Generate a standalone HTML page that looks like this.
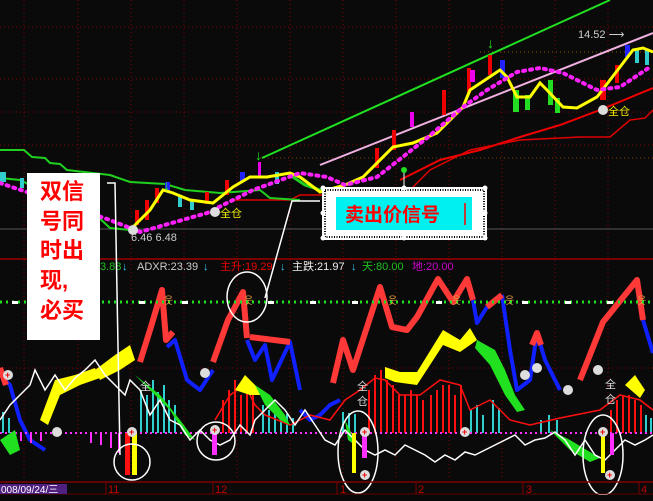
<!DOCTYPE html>
<html><head><meta charset="utf-8"><style>
html,body{margin:0;padding:0;background:#0a0a0a;width:653px;height:501px;overflow:hidden}
svg{display:block}
text{font-family:"Liberation Sans","Noto Sans CJK SC",sans-serif}
</style></head><body>
<svg width="653" height="501" viewBox="0 0 653 501" xmlns="http://www.w3.org/2000/svg">
<rect width="653" height="501" fill="#0a0a0a"/>
<g stroke="#800000" stroke-dasharray="1,3" stroke-width="1">
<line x1="0" y1="27" x2="653" y2="27"/>
<line x1="0" y1="79" x2="653" y2="79"/>
<line x1="0" y1="112" x2="653" y2="112"/>
<line x1="0" y1="145" x2="653" y2="145"/>
<line x1="0" y1="368" x2="653" y2="368"/>
<line x1="24" y1="0" x2="24" y2="480"/><line x1="78" y1="0" x2="78" y2="480"/>
<line x1="131" y1="0" x2="131" y2="480"/><line x1="184" y1="0" x2="184" y2="480"/>
<line x1="237" y1="0" x2="237" y2="480"/><line x1="290" y1="0" x2="290" y2="480"/>
<line x1="343" y1="0" x2="343" y2="480"/><line x1="396" y1="0" x2="396" y2="480"/>
<line x1="449" y1="0" x2="449" y2="480"/><line x1="502" y1="0" x2="502" y2="480"/>
<line x1="555" y1="0" x2="555" y2="480"/><line x1="608" y1="0" x2="608" y2="480"/>
</g>
<line x1="260" y1="158" x2="653" y2="158" stroke="#804000" stroke-dasharray="1,3"/>
<line x1="480" y1="52" x2="653" y2="52" stroke="#806000" stroke-dasharray="1,3"/>
<line x1="0" y1="229" x2="653" y2="229" stroke="#555" stroke-width="1"/>
<line x1="0" y1="259" x2="653" y2="259" stroke="#7a0000" stroke-width="2"/>
<line x1="262" y1="158" x2="610" y2="0" stroke="#20e020" stroke-width="2"/>
<line x1="320" y1="165" x2="653" y2="33" stroke="#f0b0e0" stroke-width="2"/>
<polyline points="400,180 440,160 480,150 520,137 560,125 600,110 653,88" fill="none" stroke="#f00000" stroke-width="2"/>
<polyline points="410,190 430,170 470,150 520,140 580,137 610,137 630,120 645,118 653,110" fill="none" stroke="#e00000" stroke-width="1.5"/>
<polyline points="230,200 290,200 300,195 330,195" fill="none" stroke="#e00000" stroke-width="1.5"/>
<polyline points="0,150 24,150 32,157 45,158 50,163 60,164 67,170 110,175 130,182 165,184 185,190 220,193 260,190 270,198 300,200" fill="none" stroke="#20d020" stroke-width="2"/>
<polyline points="0,178 20,180 30,185 60,190 80,200 110,228 130,230" fill="none" stroke="#20d020" stroke-width="2"/>
<polyline points="290,175 305,185 320,190 335,190" fill="none" stroke="#20d020" stroke-width="3"/>
<g>
<rect x="135" y="210" width="4" height="15" fill="#e00"/><rect x="145" y="200" width="4" height="20" fill="#e00"/><rect x="155" y="188" width="4" height="15" fill="#e00"/>
<rect x="165" y="182" width="5" height="10" fill="#22f"/><rect x="178" y="195" width="4" height="12" fill="#3cc"/><rect x="190" y="200" width="4" height="10" fill="#3cc"/>
<rect x="205" y="192" width="4" height="12" fill="#e00"/><rect x="225" y="180" width="4" height="15" fill="#e00"/><rect x="240" y="172" width="5" height="10" fill="#22f"/>
<rect x="258" y="162" width="3" height="15" fill="#e0e"/><rect x="275" y="172" width="4" height="12" fill="#3cc"/>
<rect x="375" y="148" width="4" height="20" fill="#e00"/><rect x="392" y="130" width="4" height="20" fill="#e00"/><rect x="410" y="112" width="4" height="15" fill="#e0e"/>
<rect x="442" y="90" width="4" height="25" fill="#e00"/><rect x="467" y="68" width="4" height="25" fill="#e00"/><rect x="470" y="70" width="5" height="12" fill="#e0e"/>
<rect x="488" y="55" width="4" height="20" fill="#e00"/><rect x="500" y="60" width="5" height="18" fill="#22f"/>
<rect x="513" y="90" width="6" height="22" fill="#2d2"/><rect x="525" y="95" width="5" height="15" fill="#2d2"/><rect x="548" y="80" width="5" height="25" fill="#2d2"/>
<rect x="555" y="98" width="5" height="15" fill="#2d2"/><rect x="600" y="80" width="6" height="20" fill="#e00"/><rect x="615" y="65" width="4" height="18" fill="#e00"/>
<rect x="625" y="45" width="5" height="12" fill="#22f"/><rect x="635" y="48" width="4" height="15" fill="#3cc"/><rect x="645" y="50" width="4" height="15" fill="#3cc"/>
<rect x="0" y="172" width="6" height="10" fill="#3cc"/><rect x="20" y="178" width="4" height="10" fill="#3cc"/>
</g>
<polyline points="130,230 150,210 163,190 173,193 190,200 213,203 233,187 250,177 267,177 290,173 300,177 320,192 345,185 363,177 393,147 413,143 437,133 463,107 470,90 500,70 507,77 517,97 530,97 540,83 547,90 563,107 577,108 597,97 610,80 633,50 643,48 653,52" fill="none" stroke="#ffff00" stroke-width="3"/>
<polyline points="0,183 110,220 140,232 207,213 253,190 300,173 327,177 345,185 377,177 427,138 463,107 487,90 517,72 540,68 563,73 597,90 620,87 650,67" fill="none" stroke="#ff20ff" stroke-width="4" stroke-dasharray="2,5" stroke-linecap="round"/>
<text x="255" y="160" fill="#20e020" font-size="14" font-weight="bold">↓</text>
<text x="163" y="190" fill="#20e020" font-size="14" font-weight="bold">↓</text>
<text x="487" y="48" fill="#20e020" font-size="14" font-weight="bold">↓</text>
<text x="578" y="38" fill="#ccc" font-size="11">14.52 ⟶</text>
<circle cx="215" cy="212" r="5" fill="#ddd"/><text x="220" y="217" fill="#ee0" font-size="11">全仓</text>
<circle cx="603" cy="110" r="5" fill="#ddd"/><text x="608" y="115" fill="#ee0" font-size="11">全仓</text>
<circle cx="133" cy="230" r="5" fill="#ddd"/><text x="131" y="241" fill="#ccc" font-size="11">6.46  6.48</text>
<g font-size="11">
<text x="100" y="270" fill="#20c020">3.88</text><text x="122" y="270" fill="#3cf">↓</text>
<text x="137" y="270" fill="#ccc">ADXR:23.39</text><text x="203" y="270" fill="#3cf">↓</text>
<text x="220" y="270" fill="#e00">主升:19.29</text><text x="280" y="270" fill="#3cf">↓</text>
<text x="292" y="270" fill="#eee">主跌:21.97</text><text x="351" y="270" fill="#3cf">↓</text>
<text x="362" y="270" fill="#20c020">天:80.00</text>
<text x="412" y="270" fill="#c0c">地:20.00</text>
</g>
<g fill="none" stroke="#1020ff" stroke-width="4" stroke-linejoin="round">
<polyline points="0,375 10,385 20,420 30,440 45,450"/>
<polyline points="167,347 175,340 187,380 200,390 213,370"/>
<polyline points="247,340 255,360 265,345 272,380 290,342 300,390"/>
<polyline points="473,300 477,323 487,307"/>
<polyline points="502,295 510,350 517,390 530,380 537,333 545,360 560,390"/>
<polyline points="643,320 653,353"/>
<polyline points="300,410 310,420 320,415 330,405 340,400"/>
</g>
<g fill="none" stroke="#ff3838" stroke-width="6" stroke-linejoin="round">
<polyline points="140,362 150,330 162,290 166,340 173,332"/>
<polyline points="213,362 228,320 243,292 247,338"/>
<polyline points="250,337 290,342"/>
<polyline points="333,383 343,340 353,370 380,287 392,327 407,330 417,317 438,279 453,302 467,279 473,300"/>
<polyline points="487,307 502,295"/>
<polyline points="532,345 537,333 541,345"/>
<polyline points="580,380 603,322 637,280 643,320"/>
<polyline points="0,368 6,385"/>
</g>
<line x1="0" y1="302" x2="653" y2="302" stroke="#20e020" stroke-width="3" stroke-dasharray="2,4"/>
<g fill="#fff"><rect x="12" y="301" width="6" height="3"/><rect x="139" y="301" width="6" height="3"/><rect x="182" y="301" width="6" height="3"/><rect x="268" y="301" width="6" height="3"/><rect x="310" y="301" width="6" height="3"/><rect x="352" y="301" width="6" height="3"/><rect x="436" y="301" width="6" height="3"/><rect x="522" y="301" width="6" height="3"/><rect x="565" y="301" width="6" height="3"/><rect x="607" y="301" width="6" height="3"/></g>
<g fill="#e0a040" font-size="10"><text x="164" y="304">웃</text><text x="244" y="304">웃</text><text x="388" y="304">웃</text><text x="452" y="304">웃</text><text x="505" y="304">웃</text><text x="637" y="304">웃</text></g>
<g fill="#30d0d0">
<rect x="2" y="412" width="2" height="21"/><rect x="8" y="418" width="2" height="15"/>
<rect x="140" y="390" width="2" height="43"/><rect x="146" y="395" width="2" height="38"/><rect x="152" y="380" width="2" height="53"/><rect x="157" y="392" width="2" height="41"/><rect x="163" y="385" width="2" height="48"/><rect x="168" y="400" width="2" height="33"/><rect x="174" y="405" width="2" height="28"/>
<rect x="262" y="405" width="2" height="28"/><rect x="268" y="410" width="2" height="23"/><rect x="274" y="408" width="2" height="25"/><rect x="280" y="412" width="2" height="21"/><rect x="286" y="414" width="2" height="19"/><rect x="292" y="418" width="2" height="15"/>
<rect x="342" y="412" width="2" height="21"/><rect x="348" y="413" width="2" height="20"/><rect x="354" y="414" width="2" height="19"/>
<rect x="470" y="410" width="2" height="23"/><rect x="476" y="405" width="2" height="28"/><rect x="482" y="415" width="2" height="18"/><rect x="492" y="400" width="2" height="33"/><rect x="498" y="408" width="2" height="25"/>
<rect x="540" y="420" width="2" height="13"/><rect x="548" y="415" width="2" height="18"/><rect x="556" y="420" width="2" height="13"/><rect x="645" y="415" width="2" height="18"/><rect x="650" y="418" width="2" height="15"/>
</g>
<g fill="#ff1010">
<rect x="222" y="400" width="2" height="33"/><rect x="228" y="390" width="2" height="43"/><rect x="234" y="380" width="2" height="53"/><rect x="240" y="395" width="2" height="38"/><rect x="246" y="385" width="2" height="48"/><rect x="252" y="395" width="2" height="38"/>
<rect x="368" y="390" width="2" height="43"/><rect x="374" y="375" width="2" height="58"/><rect x="380" y="370" width="2" height="63"/><rect x="386" y="380" width="2" height="53"/><rect x="392" y="385" width="2" height="48"/><rect x="398" y="395" width="2" height="38"/>
<rect x="404" y="395" width="2" height="38"/><rect x="410" y="390" width="2" height="43"/><rect x="416" y="395" width="2" height="38"/><rect x="422" y="400" width="2" height="33"/>
<rect x="430" y="395" width="2" height="38"/><rect x="436" y="390" width="2" height="43"/><rect x="442" y="385" width="2" height="48"/><rect x="448" y="385" width="2" height="48"/><rect x="454" y="395" width="2" height="38"/><rect x="460" y="385" width="2" height="48"/>
<rect x="610" y="410" width="2" height="23"/><rect x="616" y="400" width="2" height="33"/><rect x="622" y="395" width="2" height="38"/><rect x="628" y="395" width="2" height="38"/><rect x="634" y="400" width="2" height="33"/><rect x="640" y="405" width="2" height="28"/>
</g>
<polyline points="215,420 230,395 245,385 255,405 265,415 290,425 310,415 330,420 345,400 360,390 375,378 385,380 400,395 420,395 440,380 460,385 470,410 490,400 510,420 530,425 560,418 600,410 620,395 640,400 653,410" fill="none" stroke="#ff1010" stroke-width="1.5"/>
<g fill="#ff30ff">
<rect x="20" y="433" width="2" height="8"/><rect x="30" y="433" width="2" height="10"/><rect x="40" y="433" width="2" height="8"/><rect x="90" y="433" width="2" height="10"/><rect x="100" y="433" width="2" height="12"/><rect x="110" y="433" width="2" height="15"/><rect x="118" y="433" width="2" height="20"/>
</g>
<line x1="0" y1="433" x2="653" y2="433" stroke="#ff30ff" stroke-width="2" stroke-dasharray="2,3"/>
<polygon points="40,420 55,380 75,375 95,368 100,378 80,385 60,395 48,425" fill="#ffff00"/>
<polygon points="95,370 115,355 130,345 135,360 120,370 100,380" fill="#ffff00"/>
<polygon points="235,390 245,375 255,385 262,395 250,395" fill="#ffff00"/>
<polygon points="385,367 400,372 417,372 443,330 460,340 470,328 477,340 470,345 460,352 443,345 417,385 395,382 385,378" fill="#ffff00"/>
<polygon points="625,385 635,375 645,390 640,398" fill="#ffff00"/>
<polygon points="0,440 10,455 20,450 15,430" fill="#20e020"/>
<polygon points="135,375 150,390 170,410 185,435 195,440 180,420 160,395" fill="#20e020"/>
<polygon points="255,385 270,395 285,415 290,425 280,420 265,405" fill="#20e020"/>
<polygon points="477,340 495,350 505,370 515,395 525,410 517,412 505,395 490,365 475,348" fill="#20e020"/>
<polygon points="550,430 570,440 590,452 600,458 590,462 570,450" fill="#20e020"/>
<polygon points="345,420 350,430 355,445 348,440" fill="#20e020"/>
<polyline points="0,420 10,405 20,395 30,385 35,370 45,390 55,375 65,390 75,378 85,370 95,360 105,375 115,385 125,395 130,380 140,390 150,415 160,400 170,420 180,425 190,440 200,430 210,440 220,445 230,440 240,425 250,435 255,420 265,410 275,400 285,410 295,425 305,410 315,425 325,440 335,445 345,430 355,440 365,450 375,455 385,450 395,455 405,445 415,450 425,455 435,462 445,455 455,460 465,452 475,455 485,450 495,445 505,440 515,435 525,445 535,440 545,438 555,432 565,440 575,455 585,440 595,455 605,460 615,450 625,440 635,445 645,440 653,435" fill="none" stroke="#fff" stroke-width="1.5"/>
<rect x="125" y="433" width="5" height="42" fill="#ff1010"/><rect x="132" y="433" width="5" height="42" fill="#ffff00"/>
<rect x="212" y="430" width="5" height="25" fill="#ff30ff"/>
<rect x="352" y="433" width="4" height="40" fill="#ffff00"/><rect x="362" y="433" width="5" height="25" fill="#ff30ff"/>
<rect x="601" y="433" width="4" height="40" fill="#ffff00"/><rect x="610" y="433" width="4" height="22" fill="#ff30ff"/>
<g fill="#ddd"><circle cx="8" cy="375" r="5"/><circle cx="132" cy="432" r="5"/><circle cx="205" cy="373" r="5"/><circle cx="215" cy="430" r="5"/><circle cx="365" cy="432" r="5"/><circle cx="365" cy="475" r="5"/><circle cx="465" cy="432" r="5"/><circle cx="525" cy="375" r="5"/><circle cx="568" cy="390" r="5"/><circle cx="603" cy="432" r="5"/><circle cx="610" cy="475" r="5"/><circle cx="598" cy="370" r="5"/><circle cx="57" cy="432" r="5"/><circle cx="537" cy="368" r="5"/></g>
<g fill="#e00" font-size="9" font-weight="bold"><text x="5" y="378">+</text><text x="129" y="435">+</text><text x="212" y="433">+</text><text x="362" y="435">+</text><text x="362" y="478">+</text><text x="462" y="435">+</text><text x="600" y="435">+</text><text x="607" y="478">+</text></g>
<text x="605" y="388" fill="#ddd" font-size="11">全</text><text x="605" y="403" fill="#ddd" font-size="11">仓</text>
<text x="357" y="390" fill="#ddd" font-size="11">全</text><text x="357" y="405" fill="#ddd" font-size="11">仓</text>
<text x="140" y="390" fill="#ddd" font-size="11">全</text>
<g fill="none" stroke="#fff" stroke-width="1.5">
<ellipse cx="247" cy="297" rx="20" ry="25"/>
<circle cx="132" cy="462" r="18"/>
<circle cx="216" cy="441" r="19"/>
<ellipse cx="358" cy="452" rx="20" ry="41"/>
<ellipse cx="603" cy="455" rx="20" ry="40"/>
</g>
<polyline points="107,183 115,183 120,455" fill="none" stroke="#fff" stroke-width="1.5"/>
<polyline points="265,298 292,201 320,201" fill="none" stroke="#fff" stroke-width="1.5"/>
<line x1="0" y1="482" x2="653" y2="482" stroke="#800000" stroke-width="1.5"/>
<line x1="0" y1="494" x2="653" y2="494" stroke="#600000" stroke-width="1"/>
<rect x="0" y="484" width="67" height="10" fill="#502080"/>
<text x="1" y="493" fill="#fff" font-size="10">008/09/24/三</text>
<g fill="#c00000" font-size="11"><text x="108" y="493">11</text><text x="215" y="493">12</text><text x="340" y="493">1</text><text x="418" y="493">2</text><text x="526" y="493">3</text><text x="641" y="493">4</text></g>
<g stroke="#800000"><line x1="106" y1="482" x2="106" y2="494"/><line x1="213" y1="482" x2="213" y2="494"/><line x1="337" y1="482" x2="337" y2="494"/><line x1="416" y1="482" x2="416" y2="494"/><line x1="523" y1="482" x2="523" y2="494"/><line x1="639" y1="482" x2="639" y2="494"/></g>
<rect x="0" y="495" width="653" height="6" fill="#080808"/>
<rect x="27" y="173" width="73" height="167" fill="#fff"/>
<g fill="#ff0000" font-size="22" font-weight="bold">
<text x="40" y="199">双信</text><text x="40" y="229">号同</text><text x="40" y="258">时出</text><text x="40" y="288">现,</text><text x="40" y="318">必买</text>
</g>
<rect x="322" y="187" width="165" height="53" fill="#fff"/>
<rect x="325" y="190" width="159" height="47" fill="none" stroke="#000" stroke-width="2" stroke-dasharray="1,1.5"/>
<rect x="328" y="193" width="153" height="41" fill="#fff"/>
<rect x="336" y="197" width="136" height="33" fill="#00f0f0"/>
<text x="345" y="221" fill="#ff0000" font-size="19" font-weight="bold">卖出价信号</text>
<line x1="465" y1="203" x2="465" y2="225" stroke="#f00" stroke-width="1.5"/>
<g fill="#fff"><circle cx="323" cy="188" r="2.5"/><circle cx="404" cy="188" r="2.5"/><circle cx="485" cy="188" r="2.5"/><circle cx="323" cy="213" r="2.5"/><circle cx="485" cy="213" r="2.5"/><circle cx="323" cy="238" r="2.5"/><circle cx="404" cy="238" r="2.5"/><circle cx="485" cy="238" r="2.5"/></g>
<line x1="404" y1="170" x2="404" y2="187" stroke="#fff"/><circle cx="404" cy="170" r="3" fill="#2d2"/>
</svg>
</body></html>
